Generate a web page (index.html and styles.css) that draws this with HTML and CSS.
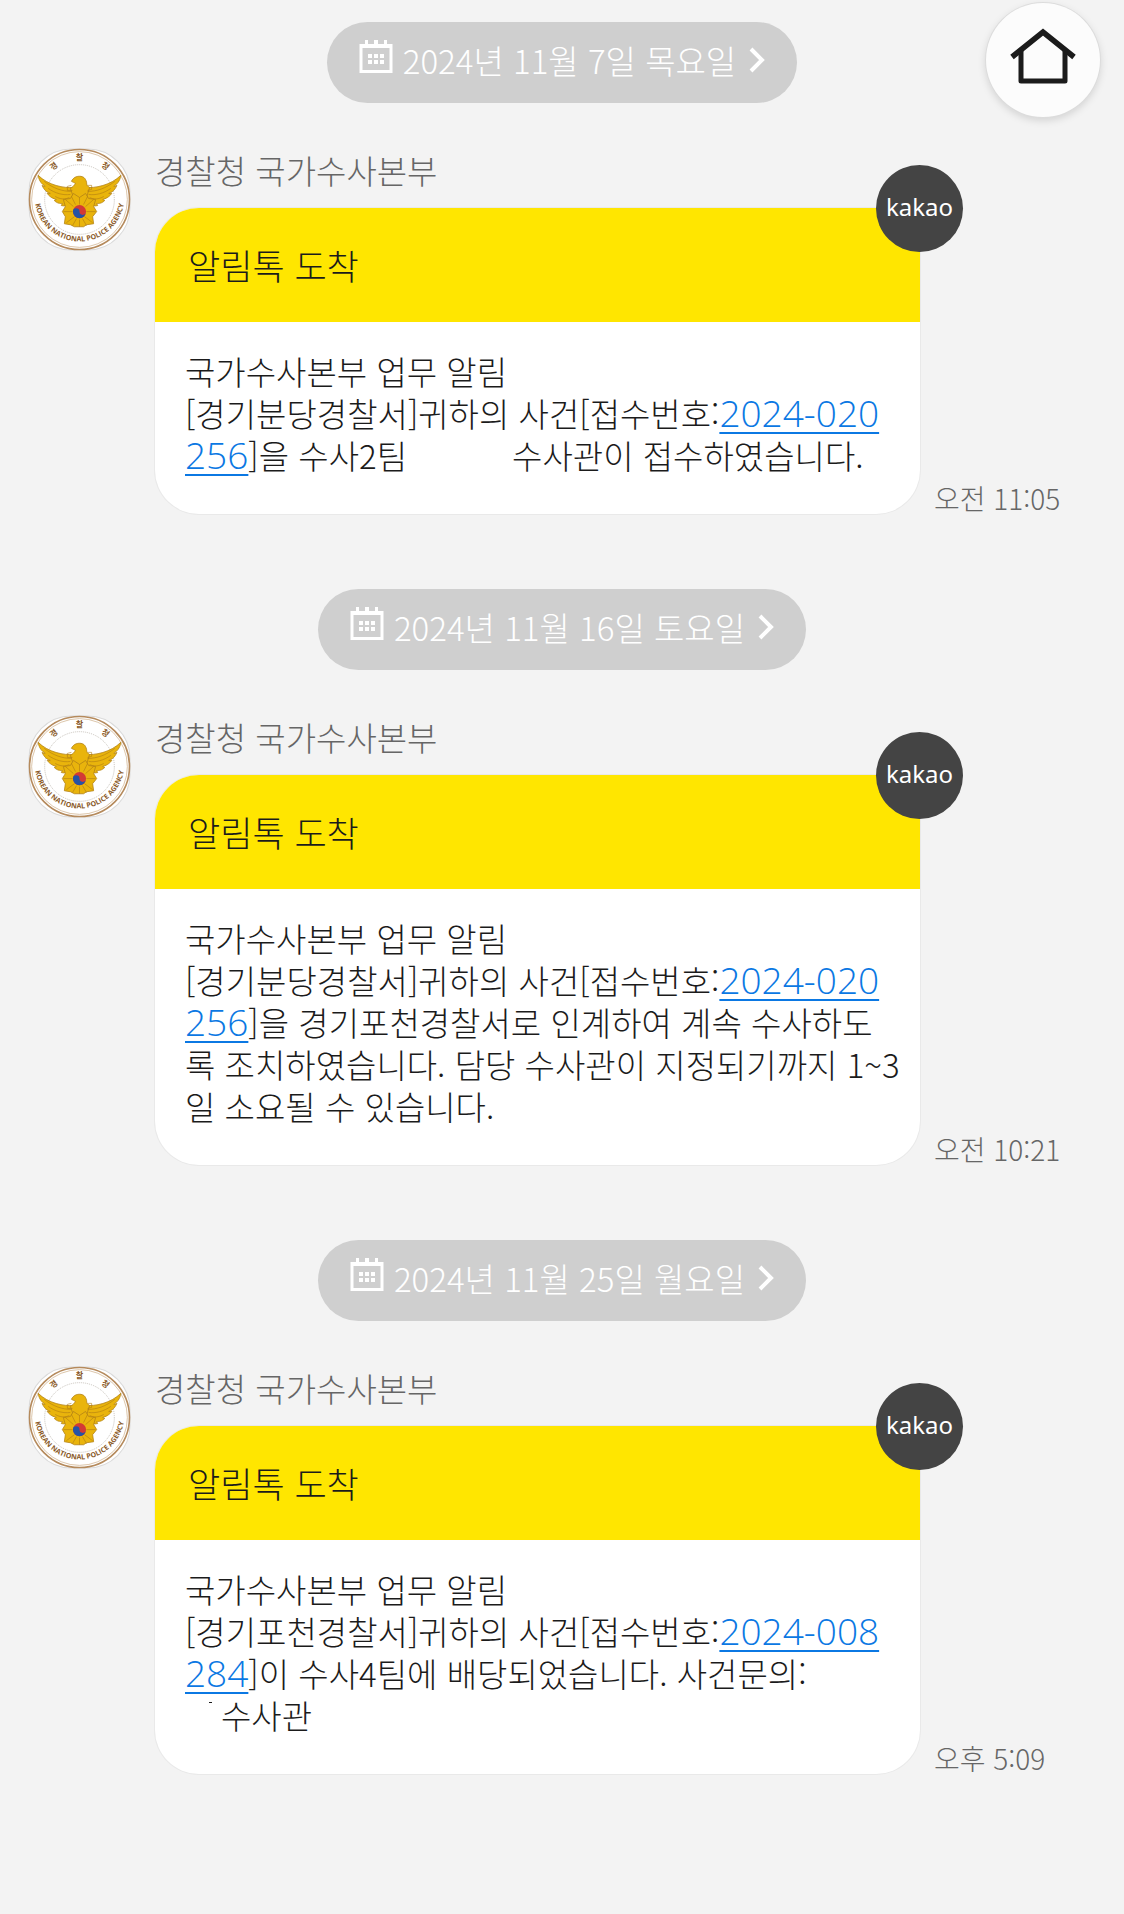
FILE: index.html
```html
<!DOCTYPE html>
<html lang="ko">

<head>
    <meta charset="UTF-8" />
    <meta name="viewport" content="width=device-width, initial-scale=1">
    <title>경찰청 국가수사본부</title>
    <link rel="stylesheet" href="styles.css">
</head>

<body>
    <!-- shared icons -->
    <svg class="icons" aria-hidden="true">
        <symbol id="calendar" viewBox="0 0 34 34">
            <path fill="none" stroke="currentColor" stroke-width="3" d="M2 5.5h30v26H2z" />
            <path fill="currentColor" d="M1 4h32v4H1zM6 0h3v6H6zM15 0h4v6h-4zM25 0h3v6h-3zM9 14h4v4H9zM15 14h4v4h-4zM21 14h4v4h-4zM9 20h4v4H9zM15 20h4v4h-4zM21 20h4v4h-4z" />
        </symbol>
        <symbol id="arrow" viewBox="0 0 16 26">
            <path fill="none" stroke="currentColor" stroke-width="4" d="M2 2l11 11L2 24" />
        </symbol>
        <symbol id="emblem" viewBox="0 0 102 102">
            <rect x="1" y="1" width="100" height="100" rx="42" fill="#fff" stroke="#dadada" />
            <circle cx="51" cy="51" r="49.5" fill="#fff" stroke="#b58a5c" stroke-width="1.6" />
            <circle cx="51" cy="51" r="47.4" fill="none" stroke="#d3b897" stroke-width=".8" />
            <circle cx="51" cy="51" r="34.5" fill="none" stroke="#b9b3aa" stroke-width=".8" stroke-dasharray="1 1" />
            <path id="ring-top" d="M12 51a39 39 0 0 1 78 0" fill="none" />
            <path id="ring-bottom" d="M6.500 48a44.500 44.500 0 0 0 89 0" fill="none" />
            <g fill="#8a5a28" text-anchor="middle">
                <text class="emblem-ko"><textPath href="#ring-top" startOffset="29%">경</textPath></text>
                <text class="emblem-ko"><textPath href="#ring-top" startOffset="50%">찰</textPath></text>
                <text class="emblem-ko"><textPath href="#ring-top" startOffset="71%">청</textPath></text>
                <text class="emblem-en"><textPath href="#ring-bottom" startOffset="50%">KOREAN NATIONAL POLICE AGENCY</textPath></text>
            </g>
            <g fill="#e9b40c" stroke="#b38316" stroke-width=".8" stroke-linejoin="round">
                <path d="M45 39C36 40 20 37 10 27c1 6 4 9 7 11-1 0-2 0-3-1 2 5 5 7 8 8l-3 0c3 4 6 5 9 6l-2 1c3 3 6 3 8 3l-1 2c4 1 7 0 10-2z" />
                <path d="M57 39c9 1 25-2 35-12-1 6-4 9-7 11 1 0 2 0 3-1-2 5-5 7-8 8l3 0c-3 4-6 5-9 6l2 1c-3 3-6 3-8 3l1 2c-4 1-7 0-10-2z" />
                <path d="M43 33c2-4 5-5 8-5 4 0 6 2 7 6 0 3 1 4 3 5l-4 13H46l-4-12c2-1 4-3 5-5-1-1-3-1-4-2z" />
                <path d="M45 45l6 4 6-4 3 5 7 1-2 7 3 5-4 5 1 7-7 1-3 2H46l-4-2-6-1 1-7-3-5 3-5-2-7 7-1z" />
            </g>
            <g fill="none" stroke="#b07d12" stroke-width=".6">
                <path d="M16 33c9 7 18 10 27 10M20 40c7 5 15 7 22 6M27 48c5 3 10 3 14 1M86 33c-9 7-18 10-27 10M82 40c-7 5-15 7-22 6M75 48c-5 3-10 3-14 1" />
                <path d="M51 49v7M51 71v7M37 51l8 7M65 51l-8 7M35 63h9M58 63h9M38 74l8-6M64 74l-8-6M43 48l4 8M59 48l-4 8M44 77l4-7M58 77l-4-7" />
                <path d="M43 37l-4 1v4l5 0M59 37h4v4l-4 1" />
            </g>
            <circle cx="51" cy="63" r="6.500" fill="#d33a35" />
            <path d="M44.500 63a3.250 3.250 0 0 1 6.500 0 3.250 3.250 0 0 0 6.500 0 6.500 6.500 0 0 1-13 0z" fill="#2554a5" />
        </symbol>
    </svg>

    <a class="home" href="#" aria-label="홈">
        <svg viewBox="0 0 68 58" fill="none" stroke="#1b1b1b">
            <path stroke-width="5.500" d="M3 30L34 5l31 25" />
            <path stroke-width="5" stroke-linejoin="round" d="M12 23v31h44V23" />
        </svg>
    </a>

    <main class="chat">
        <section class="day">
            <button class="date" type="button">
                <svg class="date-icon"><use href="#calendar" /></svg>
                <span class="date-label">2024년 11월 7일 목요일</span>
                <svg class="date-arrow"><use href="#arrow" /></svg>
            </button>
            <article class="message">
                <svg class="avatar"><use href="#emblem" /></svg>
                <div class="content">
                    <h2 class="sender">경찰청 국가수사본부</h2>
                    <div class="card">
                        <span class="badge">kakao</span>
                        <h3 class="card-title">알림톡 도착</h3>
                        <p class="card-text">
                            국가수사본부 업무 알림<br>
                            [경기분당경찰서]귀하의 사건[접수번호:<a href="#">2024-020<br>256</a>]을 수사2팀<span class="blank"></span>수사관이 접수하였습니다.
                        </p>
                    </div>
                </div>
                <time class="time">오전 11:05</time>
            </article>
        </section>

        <section class="day">
            <button class="date" type="button">
                <svg class="date-icon"><use href="#calendar" /></svg>
                <span class="date-label">2024년 11월 16일 토요일</span>
                <svg class="date-arrow"><use href="#arrow" /></svg>
            </button>
            <article class="message">
                <svg class="avatar"><use href="#emblem" /></svg>
                <div class="content">
                    <h2 class="sender">경찰청 국가수사본부</h2>
                    <div class="card">
                        <span class="badge">kakao</span>
                        <h3 class="card-title">알림톡 도착</h3>
                        <p class="card-text">
                            국가수사본부 업무 알림<br>
                            [경기분당경찰서]귀하의 사건[접수번호:<a href="#">2024-020<br>256</a>]을 경기포천경찰서로 인계하여 계속 수사하도<br>록 조치하였습니다. 담당 수사관이 지정되기까지 1~3<br>일 소요될 수 있습니다.
                        </p>
                    </div>
                </div>
                <time class="time">오전 10:21</time>
            </article>
        </section>

        <section class="day">
            <button class="date" type="button">
                <svg class="date-icon"><use href="#calendar" /></svg>
                <span class="date-label">2024년 11월 25일 월요일</span>
                <svg class="date-arrow"><use href="#arrow" /></svg>
            </button>
            <article class="message">
                <svg class="avatar"><use href="#emblem" /></svg>
                <div class="content">
                    <h2 class="sender">경찰청 국가수사본부</h2>
                    <div class="card">
                        <span class="badge">kakao</span>
                        <h3 class="card-title">알림톡 도착</h3>
                        <p class="card-text">
                            국가수사본부 업무 알림<br>
                            [경기포천경찰서]귀하의 사건[접수번호:<a href="#">2024-008<br>284</a>]이 수사4팀에 배당되었습니다. 사건문의:<br>
                            <svg class="blank-short" viewBox="0 0 36 30"><path fill="#1b1b1b" d="M24 0h3v1h-3z" /></svg>수사관
                        </p>
                    </div>
                </div>
                <time class="time">오후 5:09</time>
            </article>
        </section>
    </main>
</body>

</html>
```
FILE: styles.css
```css
* {
    box-sizing: border-box;
}

body {
    margin: 0;
    background-color: #f3f3f3;
    color: #1b1b1b;
    font-family: "Noto Sans CJK KR", sans-serif;
    font-weight: 300;
}

.icons {
    position: absolute;
    width: 0;
    height: 0;
}

.emblem-ko {
    font-size: 8px;
    font-weight: 700;
}

.emblem-en {
    font-family: "Open Sans", sans-serif;
    font-size: 7px;
    font-weight: 700;
}

.home {
    position: fixed;
    top: 3px;
    right: 24px;
    display: flex;
    align-items: center;
    justify-content: center;
    width: 114px;
    height: 114px;
    padding-bottom: 8px;
    border-radius: 50%;
    background-color: #fcfcfc;
    box-shadow: 0 0 0 1px #dcdcdc, 0 3px 8px rgba(0, 0, 0, 0.15);
}

.home svg {
    width: 68px;
    height: 58px;
}

.chat {
    display: flex;
    flex-direction: column;
    gap: 75px;
    padding: 22px 0 140px;
}

.day {
    display: flex;
    flex-direction: column;
    align-items: center;
    gap: 45px;
}

.date {
    display: flex;
    align-items: center;
    height: 81px;
    padding: 0 32px 5px;
    border: none;
    border-radius: 41px;
    background-color: #cfcfcf;
    color: #fff;
    font: inherit;
    font-size: 33px;
    cursor: pointer;
}

.date-label {
    margin: 0 13px 0 10px;
}

.date-icon {
    width: 34px;
    height: 34px;
    margin-bottom: 6px;
}

.date-arrow {
    width: 16px;
    height: 26px;
}

.message {
    display: flex;
    align-self: stretch;
    padding: 0 28px;
}

.avatar {
    flex: none;
    width: 103px;
    height: 103px;
    margin-right: 24px;
}

.content {
    flex: 1;
    min-width: 0;
}

.sender {
    margin: 0;
    height: 60px;
    color: #666;
    font-size: 33px;
    font-weight: 300;
    line-height: 44px;
}

.card {
    position: relative;
    border-radius: 44px;
    background-color: #fff;
    box-shadow: 0 0 0 1px #e9e9e9;
}

.badge {
    position: absolute;
    top: -43px;
    right: -43px;
    width: 87px;
    height: 87px;
    border-radius: 50%;
    background-color: #444;
    color: #fff;
    font-family: "Noto Sans", sans-serif;
    font-size: 24px;
    font-weight: 400;
    line-height: 84px;
    text-align: center;
}

.card-title {
    margin: 0;
    padding: 0 33px;
    border-radius: 44px 0 0 0;
    background-color: #ffe600;
    font-size: 35px;
    font-weight: 300;
    line-height: 114px;
}

.card-text {
    margin: 0;
    padding: 28px 30px 38px;
    font-size: 33px;
    line-height: 42px;
    white-space: nowrap;
}

.card-text a {
    color: #0b78e3;
    font-family: "Open Sans", sans-serif;
    font-size: 37px;
    line-height: 1;
    text-decoration-thickness: 2px;
    text-underline-offset: 5px;
}

.blank {
    display: inline-block;
    width: 105px;
}

.blank-short {
    width: 36px;
    height: 30px;
    vertical-align: -3px;
}

.time {
    align-self: flex-end;
    flex: none;
    width: 176px;
    padding: 0 0 1px 14px;
    color: #666;
    font-size: 28px;
    line-height: 30px;
}
```
